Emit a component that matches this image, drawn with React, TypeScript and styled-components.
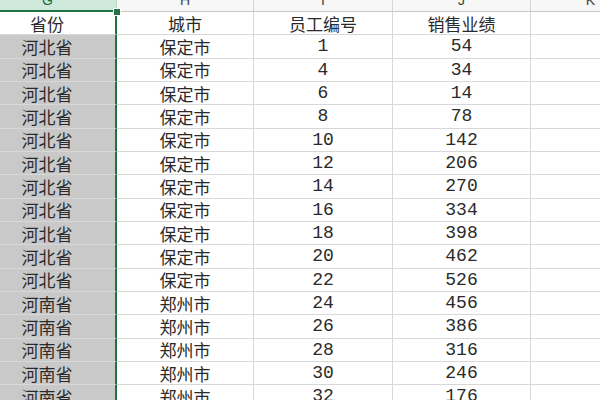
import React from "react";
import styled, { createGlobalStyle } from "styled-components";

const Global = createGlobalStyle`
  html, body { margin: 0; padding: 0; background: #ffffff; }
  body { width: 600px; height: 400px; overflow: hidden; }
`;

const Viewport = styled.div`
  position: relative;
  width: 600px;
  height: 400px;
  overflow: hidden;
  background: #ffffff;
`;

const Sheet = styled.div`
  display: grid;
  grid-template-columns: 138px 137px 139px 138px 120px;
  margin-left: -21px;
  width: 672px;
`;

const ColHead = styled.div<{ $sel?: boolean }>`
  box-sizing: border-box;
  height: 12px;
  overflow: hidden;
  display: flex;
  justify-content: center;
  background: ${(p) => (p.$sel ? "#cfe9dc" : "#f7f7f7")};
  border-right: 1px solid ${(p) => (p.$sel ? "#b9dcc9" : "#d6d6d6")};
  border-bottom: ${(p) => (p.$sel ? "2px solid #217346" : "1px solid #c8c8c8")};
  color: ${(p) => (p.$sel ? "#1e6b41" : "#444")};
  font-family: "Liberation Sans", Arial, sans-serif;
  font-size: 14px;
  line-height: 14px;
`;

const ColLetter = styled.span`
  margin-top: -7px;
`;

const Cell = styled.div<{ $gray?: boolean; $edge?: boolean; $num?: boolean }>`
  box-sizing: border-box;
  height: 23.33px;
  display: flex;
  align-items: center;
  justify-content: center;
  background: ${(p) => (p.$gray ? "#c9c9c9" : "#ffffff")};
  border-bottom: 1px solid #d8d8d8;
  border-right: ${(p) => (p.$edge ? "2px solid #217346" : "1px solid #d8d8d8")};
  color: #2a2a2a;
  font-family: ${(p) =>
    p.$num
      ? `"Liberation Mono", "Courier New", monospace`
      : `"Noto Sans CJK SC", "Noto Sans", sans-serif`};
  font-size: ${(p) => (p.$num ? "18px" : "17px")};
  line-height: 1;
  white-space: nowrap;
`;

const Handle = styled.div`
  position: absolute;
  left: 114px;
  top: 9px;
  width: 6px;
  height: 6px;
  background: #217346;
  border: 1px solid #ffffff;
  box-sizing: content-box;
  margin: -1px;
`;

const data: [string, string, number, number][] = [
  ["河北省", "保定市", 1, 54],
  ["河北省", "保定市", 4, 34],
  ["河北省", "保定市", 6, 14],
  ["河北省", "保定市", 8, 78],
  ["河北省", "保定市", 10, 142],
  ["河北省", "保定市", 12, 206],
  ["河北省", "保定市", 14, 270],
  ["河北省", "保定市", 16, 334],
  ["河北省", "保定市", 18, 398],
  ["河北省", "保定市", 20, 462],
  ["河北省", "保定市", 22, 526],
  ["河南省", "郑州市", 24, 456],
  ["河南省", "郑州市", 26, 386],
  ["河南省", "郑州市", 28, 316],
  ["河南省", "郑州市", 30, 246],
  ["河南省", "郑州市", 32, 176],
];

export default function App() {
  return (
    <Viewport>
      <Global />
      <Sheet>
        <ColHead $sel><ColLetter>G</ColLetter></ColHead>
        <ColHead><ColLetter>H</ColLetter></ColHead>
        <ColHead><ColLetter>I</ColLetter></ColHead>
        <ColHead><ColLetter>J</ColLetter></ColHead>
        <ColHead><ColLetter>K</ColLetter></ColHead>

        <Cell $edge>省份</Cell>
        <Cell>城市</Cell>
        <Cell>员工编号</Cell>
        <Cell>销售业绩</Cell>
        <Cell />

        {data.map(([p, c, id, v], i) => (
          <React.Fragment key={i}>
            <Cell $gray $edge>{p}</Cell>
            <Cell>{c}</Cell>
            <Cell $num>{id}</Cell>
            <Cell $num>{v}</Cell>
            <Cell />
          </React.Fragment>
        ))}
      </Sheet>
      <Handle />
    </Viewport>
  );
}
